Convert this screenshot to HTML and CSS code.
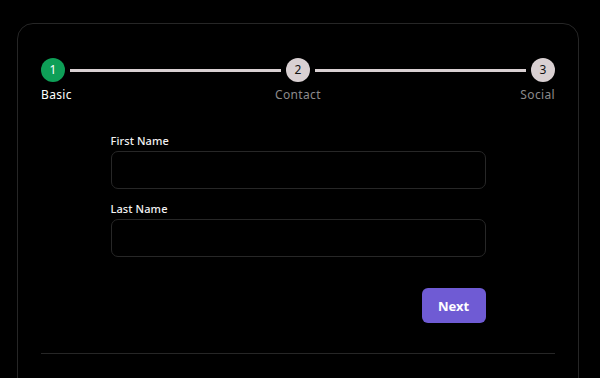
FILE: index.html
```html
<!DOCTYPE html>
<html lang="en">
<head>
<meta charset="utf-8">
<title>Stepper Form</title>
<link rel="stylesheet" href="styles.css">
</head>
<body>
  <div class="card">
    <div class="stepper">
      <div class="circle done">1</div>
      <div class="line"></div>
      <div class="circle">2</div>
      <div class="line"></div>
      <div class="circle">3</div>
    </div>
    <div class="labels">
      <span class="label active l-start">Basic</span>
      <span class="label l-center">Contact</span>
      <span class="label l-end">Social</span>
    </div>
    <form class="form">
      <div class="field">
        <label class="field-label" for="fn">First Name</label>
        <input class="input" id="fn" type="text">
      </div>
      <div class="field">
        <label class="field-label" for="ln">Last Name</label>
        <input class="input" id="ln" type="text">
      </div>
      <div class="actions">
        <button type="button" class="btn">Next</button>
      </div>
    </form>
    <div class="divider"></div>
  </div>
</body>
</html>
```

FILE: styles.css
```css
html, body {
  margin: 0;
  padding: 0;
  background: #000;
  height: 100%;
  overflow: hidden;
}
body {
  font-family: "Noto Sans", "DejaVu Sans", sans-serif;
  color: #fff;
  padding: 23px 21px 0 17px;
  box-sizing: border-box;
}
.card {
  border: 1px solid #262626;
  border-radius: 16px;
  padding: 34px 23px 40px 23px;
  background: #000;
  height: 420px;
  box-sizing: border-box;
}
.stepper {
  display: grid;
  grid-template-columns: 24px 1fr 24px 1fr 24px;
  align-items: center;
}
.circle {
  width: 24px;
  height: 24px;
  border-radius: 50%;
  background: #d9d0d2;
  color: #111;
  font-size: 12px;
  display: flex;
  align-items: center;
  justify-content: center;
  line-height: 1;
}
.circle.done {
  background: #0e9f57;
  color: #fff;
}
.line {
  height: 3px;
  background: #d9d0d2;
  margin: 0 5px 0 5px;
}
.labels {
  display: grid;
  grid-template-columns: 1fr 1fr 1fr;
  margin-top: 5px;
  font-size: 12px;
  line-height: 16px;
  letter-spacing: 0.35px;
}
.label { color: #8c8a8b; }
.label.active { color: #fff; }
.l-start { justify-self: start; }
.l-center { justify-self: center; }
.l-end { justify-self: end; }
.form {
  width: 375px;
  margin: 31px auto 0;
}
.field {
  display: flex;
  flex-direction: column;
  gap: 3px;
}
.field + .field { margin-top: 13px; }
.field-label {
  font-size: 11px;
  line-height: 14px;
  font-weight: 500;
  color: #f2f2f2;
  letter-spacing: 0.1px;
}
.input {
  height: 38px;
  box-sizing: border-box;
  background: #000;
  border: 1px solid #272727;
  border-radius: 7px;
  outline: none;
  color: #fff;
  padding: 0 10px;
}
.actions {
  display: flex;
  justify-content: flex-end;
  margin-top: 31px;
}
.btn {
  width: 64px;
  height: 35px;
  border: none;
  border-radius: 6px;
  background: #6f5bd4;
  color: #fff;
  font-family: inherit;
  font-size: 13px;
  font-weight: 700;
  cursor: pointer;
}
.divider {
  height: 1px;
  background: #262626;
  margin-top: 30px;
}
```
